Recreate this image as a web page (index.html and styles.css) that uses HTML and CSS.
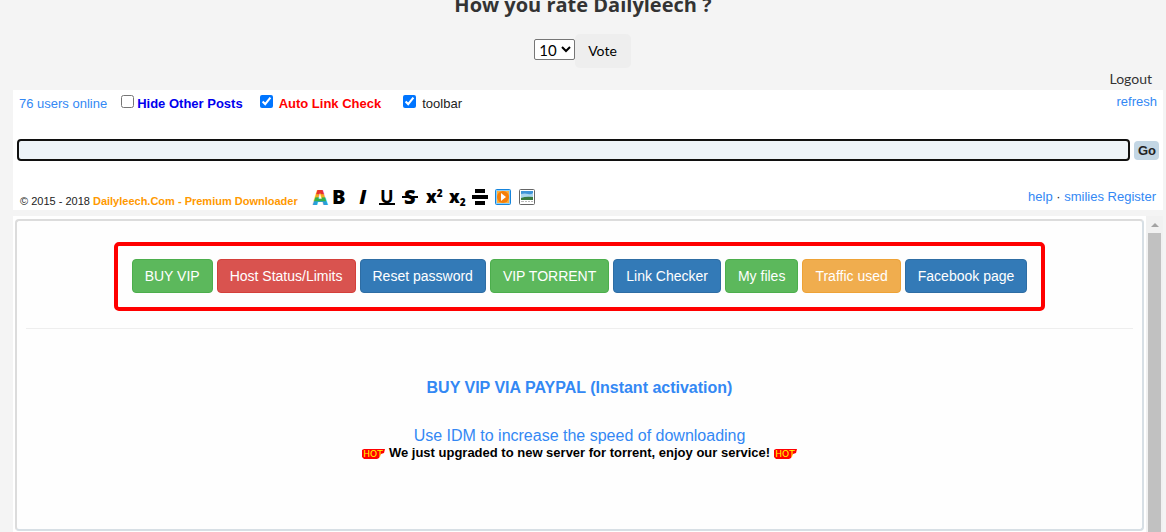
FILE: index.html
```html
<!DOCTYPE html>
<html lang="en">
<head>
  <meta charset="UTF-8" />
  <meta name="viewport" content="width=device-width, initial-scale=1.0"/>
  <title>Dailyleech</title>
  <link rel="stylesheet" href="styles.css">
</head>
<body>
  <header>
    <h1>How you rate Dailyleech ?</h1>
    <form class="vote-form">
      <select class="vote-select" aria-label="Rating">
        <option>10</option>
        <option>9</option>
        <option>8</option>
        <option>7</option>
        <option>6</option>
        <option>5</option>
      </select>
      <button type="button" class="vote-btn">Vote</button>
    </form>
    <div class="account"><a href="#">Logout</a></div>
  </header>

  <section class="post-box">
    <div class="options">
      <a href="#" class="online">76 users online</a>
      <label class="opt-hide"><input type="checkbox" />Hide Other Posts</label>
      <label class="opt-check"><input type="checkbox" checked />Auto Link Check</label>
      <label class="opt-toolbar"><input type="checkbox" checked />toolbar</label>
      <a href="#" class="refresh">refresh</a>
    </div>

    <form class="post-form">
      <input type="text" class="post-input" aria-label="Message" />
      <button type="button" class="go-btn">Go</button>
    </form>

    <div class="post-footer">
      <div class="copyright">&copy; 2015 - 2018 <a href="#">Dailyleech.Com - Premium Downloader</a></div>
      <div class="tools">
        <button type="button" aria-label="Color">
          <svg width="20" height="26" viewBox="0 0 20 26">
            <defs>
              <linearGradient id="rainbow" gradientUnits="userSpaceOnUse" x1="0" y1="5" x2="0" y2="21">
                <stop offset="0.3" stop-color="#e8352c"/>
                <stop offset="0.35" stop-color="#f2a01e"/>
                <stop offset="0.5" stop-color="#f2b01e"/>
                <stop offset="0.55" stop-color="#35b04a"/>
                <stop offset="0.72" stop-color="#35b04a"/>
                <stop offset="0.8" stop-color="#2a9fd8"/>
              </linearGradient>
            </defs>
            <text x="10" y="21" class="glyph-a" fill="url(#rainbow)">A</text>
          </svg>
        </button>
        <button type="button" class="bold" aria-label="Bold">B</button>
        <button type="button" class="italic" aria-label="Italic">I</button>
        <button type="button" class="underline" aria-label="Underline">U</button>
        <button type="button" class="strike" aria-label="Strike">S</button>
        <button type="button" class="script" aria-label="Superscript">x<sup>2</sup></button>
        <button type="button" class="script" aria-label="Subscript">x<sub>2</sub></button>
        <button type="button" class="center" aria-label="Center">
          <svg width="16" height="16" viewBox="0 0 16 16">
            <path d="M3 0h10v4H3zM0 6h16v4H0zM3 12h10v4H3z" fill="#000"/>
          </svg>
        </button>
        <button type="button" aria-label="Video">
          <svg width="16" height="16" viewBox="0 0 16 16">
            <rect x="0.5" y="0.5" width="15" height="15" rx="1" fill="#8fd0fa" stroke="#1684dc"/>
            <rect x="2" y="2" width="12" height="12" fill="#fbb040"/>
            <circle cx="8" cy="8" r="6" fill="#f57f0a"/>
            <path d="M6 4l5 4-5 4z" fill="#fff"/>
          </svg>
        </button>
        <button type="button" aria-label="Image">
          <svg width="16" height="16" viewBox="0 0 16 16">
            <rect x="0.5" y="0.5" width="15" height="15" rx="1" fill="#fff" stroke="#666"/>
            <rect x="2" y="2" width="12" height="9" fill="#3f94d8"/>
            <path d="M2 5q4-1 7 0t5-1v5H2z" fill="#a9d5ee"/>
            <path d="M2 9q5-2 12-1v3H2z" fill="#397b41"/>
            <path d="M2 12.500h3M6 12.500h2M9 12.500h2M12 12.500h2" stroke="#bbb"/>
          </svg>
        </button>
      </div>
      <div class="links"><a href="#">help</a> · <a href="#">smilies</a> <a href="#">Register</a></div>
    </div>
  </section>

  <main class="chat">
    <div class="chat-view">
      <div class="notice">
        <nav class="menu">
          <a href="#" class="btn green">BUY VIP</a>
          <a href="#" class="btn red">Host Status/Limits</a>
          <a href="#" class="btn blue">Reset password</a>
          <a href="#" class="btn green">VIP TORRENT</a>
          <a href="#" class="btn blue">Link Checker</a>
          <a href="#" class="btn green">My files</a>
          <a href="#" class="btn orange">Traffic used</a>
          <a href="#" class="btn blue">Facebook page</a>
        </nav>
        <hr />
        <a href="#" class="buy">BUY VIP VIA PAYPAL (Instant activation)</a>
        <a href="#" class="idm">Use IDM to increase the speed of downloading</a>
        <p class="news">
          <svg class="hot" width="23" height="11" viewBox="0 0 23 11">
            <path d="M0 2l2-1h21l-1 4-3 1-2 4-2 1H2l-2-2z" fill="#f00"/>
            <text x="11" y="9">HOT</text>
          </svg>
          We just upgraded to new server for torrent, enjoy our service!
          <svg class="hot" width="23" height="11" viewBox="0 0 23 11">
            <path d="M0 2l2-1h21l-1 4-3 1-2 4-2 1H2l-2-2z" fill="#f00"/>
            <text x="11" y="9">HOT</text>
          </svg>
        </p>
      </div>
    </div>
    <div class="scrollbar" aria-hidden="true">
      <div class="arrow"></div>
      <div class="thumb"></div>
    </div>
  </main>
</body>
</html>
```
FILE: styles.css
```css
* {
  box-sizing: border-box;
}

body {
  font-family: "Liberation Sans", Arial, sans-serif;
  font-size: 13px;
  margin: 0;
  padding: 0 3px 0 13px;
  height: 100vh;
  overflow: hidden;
  background-color: #f4f4f4;
  color: #222;
  display: flex;
  flex-direction: column;
}

a {
  color: #3388f4;
  text-decoration: none;
}

button {
  border: none;
  cursor: pointer;
}

header {
  font-family: Lato, sans-serif;
  flex-shrink: 0;
}

h1 {
  font-family: "Open Sans", sans-serif;
  font-size: 20px;
  line-height: 24px;
  text-align: center;
  color: #333;
  margin: -7px 10px 17px 0;
}

.vote-form {
  display: flex;
  justify-content: center;
  margin-right: 11px;
}

.vote-select {
  font-family: Lato, sans-serif;
  font-size: 15px;
  width: 41px;
  height: 21px;
  margin-top: 5px;
  padding: 0;
  border: 1px solid #767676;
  border-radius: 2px;
  background-color: #fff;
  color: #000;
}

.vote-btn {
  font-family: Lato, sans-serif;
  font-size: 14px;
  height: 34px;
  padding: 0 14px 1px 13px;
  border-radius: 5px;
  background-color: #eee;
  color: #000;
}

.account {
  font-size: 14px;
  line-height: 22px;
  padding-right: 11px;
  text-align: right;
}

.account a {
  color: #333;
}

.post-box {
  background-color: #fff;
  height: 120px;
  flex-shrink: 0;
  display: flex;
  flex-direction: column;
}

.options {
  display: flex;
  align-items: center;
  height: 26px;
  padding: 0 6px;
}

.options label {
  display: flex;
  align-items: center;
}

.options input {
  width: 13px;
  height: 13px;
  margin: 0 0 4px;
}

.opt-hide {
  color: #00e;
  font-weight: bold;
  gap: 3px;
  margin-left: 14px;
}

.opt-check {
  color: #f00;
  font-weight: bold;
  gap: 6px;
  margin-left: 17px;
}

.opt-toolbar {
  gap: 6px;
  margin-left: 22px;
}

.refresh {
  margin-left: auto;
  padding-bottom: 4px;
}

.post-form {
  display: flex;
  align-items: center;
  gap: 4px;
  padding: 0 4px;
  margin-top: 23px;
}

.post-input {
  flex: 1;
  height: 22px;
  border: 2px solid #101010;
  border-radius: 4px;
  background-color: #edf3f8;
  outline: none;
}

.go-btn {
  font-family: inherit;
  font-size: 13px;
  font-weight: bold;
  height: 19px;
  padding: 0 3px 0 4px;
  border-radius: 4px;
  background-color: #c3d6e4;
  color: #222;
}

.post-footer {
  display: flex;
  align-items: center;
  margin-top: auto;
  height: 26px;
  padding: 0 7px;
}

.copyright {
  font-size: 11px;
  padding-top: 8px;
}

.copyright a {
  color: #f90;
  font-weight: bold;
}

.tools {
  display: flex;
  align-items: center;
  gap: 4px;
  margin-left: 12px;
}

.tools button {
  font-family: "Open Sans", sans-serif;
  font-size: 20px;
  font-weight: 800;
  line-height: 20px;
  display: flex;
  align-items: center;
  justify-content: center;
  width: 20px;
  height: 20px;
  padding: 0;
  background: none;
  color: #000;
}

.tools button:first-child {
  margin-right: -5px;
}

.tools svg {
  flex-shrink: 0;
}

.glyph-a {
  font-family: "Open Sans", sans-serif;
  font-size: 21px;
  font-weight: 800;
  text-anchor: middle;
}

.tools .italic {
  font-style: italic;
}

.tools .underline {
  font-size: 18px;
  font-weight: 700;
  line-height: 14px;
  width: 16px;
  height: 16px;
  margin: 0 2px;
  border-bottom: 2px solid #000;
}

.tools .strike {
  width: 16px;
  margin: 0 3px 0 1px;
  background: linear-gradient(#000, #000) center / 16px 2px no-repeat;
}

.tools .script {
  font-size: 17px;
  width: 19px;
}

.tools .center {
  width: 18px;
}

.script sup,
.script sub {
  font-size: 10px;
  line-height: 10px;
}

.script sup {
  padding-bottom: 8px;
}

.script sub {
  padding-top: 10px;
}

.links {
  margin-left: auto;
  padding-bottom: 1px;
}

.chat {
  flex: 1;
  min-height: 0;
  margin-top: 6px;
  background-color: #fff;
  display: flex;
}

.chat-view {
  flex: 1;
  padding: 3px 2px 0;
}

.notice {
  height: calc(100% - 1px);
  border: 2px solid #d7dfe5;
  border-top-color: #dcdcdc;
  border-left-color: #dcdcdc;
  border-radius: 4px;
  background-color: #fefefe;
  padding: 21px 9px;
  display: flex;
  flex-direction: column;
  align-items: center;
}

.menu {
  display: flex;
  gap: 4px;
  padding: 13px 14px 14px;
  border: 4px solid #f00;
  border-radius: 5px;
}

.btn {
  font-size: 14px;
  line-height: 20px;
  padding: 6px 12px;
  border: 1px solid;
  border-radius: 4px;
  color: #fff;
  white-space: nowrap;
}

.green {
  background-color: #5cb85c;
  border-color: #4cae4c;
}

.red {
  background-color: #d9534f;
  border-color: #d43f3a;
}

.blue {
  background-color: #337ab7;
  border-color: #2e6da4;
}

.orange {
  background-color: #f0ad4e;
  border-color: #eea236;
}

hr {
  width: 100%;
  border: 0;
  border-top: 1px solid #eee;
  margin: 17px 0 50px;
}

.buy {
  font-size: 16px;
  line-height: 18px;
  font-weight: bold;
}

.idm {
  font-size: 16px;
  line-height: 18px;
  margin-top: 30px;
}

.news {
  display: flex;
  align-items: center;
  gap: 4px;
  margin: 0;
  font-weight: bold;
  line-height: 16px;
  color: #000;
}

.hot {
  margin-top: 1px;
}

.hot text {
  font-family: "DejaVu Sans", sans-serif;
  font-size: 9px;
  font-weight: normal;
  text-anchor: middle;
  fill: #ff0;
}

.scrollbar {
  width: 17px;
  background-color: #f1f1f1;
  display: flex;
  flex-direction: column;
  align-items: center;
}

.arrow {
  border: 4px solid transparent;
  border-top: 0;
  border-bottom-color: #a3a3a3;
  margin: 7px 0 6px;
}

.thumb {
  flex: 1;
  width: 13px;
  background-color: #c1c1c1;
}
```
